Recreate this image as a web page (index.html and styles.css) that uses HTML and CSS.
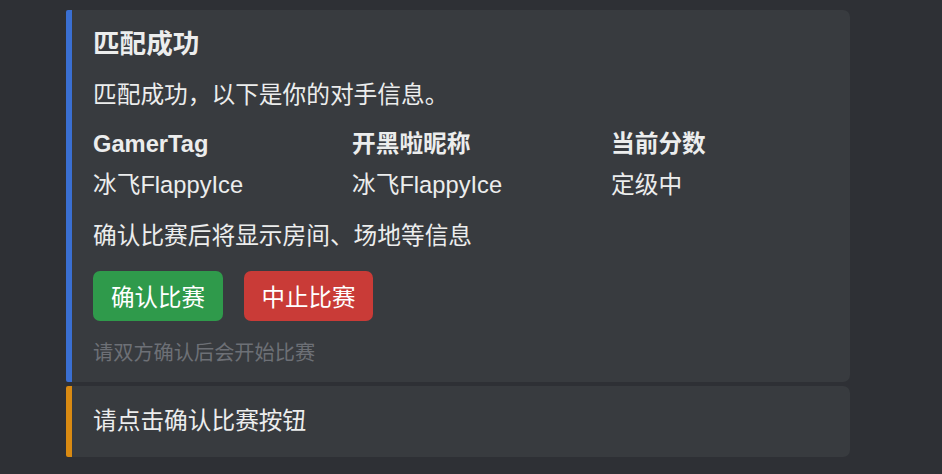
FILE: index.html
```html
<!DOCTYPE html>
<html lang="zh-CN">
<head>
<meta charset="utf-8">
<title>匹配成功</title>
<link rel="stylesheet" href="styles.css">
</head>
<body>
<main class="stack">
  <section class="card card-blue">
    <h1 class="title">匹配成功</h1>
    <p class="lead">匹配成功，以下是你的对手信息。</p>
    <div class="info-grid">
      <div class="th">GamerTag</div>
      <div class="th">开黑啦昵称</div>
      <div class="th">当前分数</div>
      <div class="td">冰飞FlappyIce</div>
      <div class="td">冰飞FlappyIce</div>
      <div class="td">定级中</div>
    </div>
    <p class="note">确认比赛后将显示房间、场地等信息</p>
    <div class="actions">
      <button class="btn btn-green">确认比赛</button>
      <button class="btn btn-red">中止比赛</button>
    </div>
    <p class="hint">请双方确认后会开始比赛</p>
  </section>
  <section class="card card-orange">
    <p class="msg">请点击确认比赛按钮</p>
  </section>
</main>
</body>
</html>
```

FILE: styles.css
```css
html, body {
  margin: 0;
  padding: 0;
  background: #2e3035;
  font-family: "Liberation Sans", "Noto Sans CJK SC", sans-serif;
  color: #eceded;
}

.stack {
  display: flex;
  flex-direction: column;
  gap: 4px;
  width: 784px;
  margin-left: 66px;
  padding-top: 10px;
}

.card {
  background: #383b3f;
  border-radius: 2px 7px 7px 2px;
  border-left: 6px solid #3a6fd2;
  padding: 16px 21px 15px 21px;
}

.card-orange {
  border-left-color: #d98a12;
  padding-top: 18px;
  padding-bottom: 19px;
}

.title {
  margin: 0;
  font-size: 26.6px;
  line-height: 36px;
  font-weight: bold;
}

.lead {
  margin: 16px 0 0;
  font-size: 23.7px;
  line-height: 34px;
}

.info-grid {
  margin-top: 15px;
  display: grid;
  grid-template-columns: repeat(3, 259px);
  row-gap: 7px;
}

.th {
  font-size: 23.7px;
  line-height: 34px;
  font-weight: bold;
}

.td {
  font-size: 23.7px;
  line-height: 34px;
}

.note {
  margin: 17px 0 0;
  font-size: 23.7px;
  line-height: 34px;
}

.actions {
  margin-top: 18px;
  display: flex;
  gap: 21px;
}

.btn {
  height: 50px;
  width: 130px;
  border: none;
  border-radius: 7px;
  color: #ffffff;
  font-family: "Liberation Sans", "Noto Sans CJK SC", sans-serif;
  font-size: 23.5px;
  font-weight: 400;
  padding: 0;
}

.btn-green { background: #2f9a4b; }
.btn-red { background: #c93b37; width: 129px; }

.hint {
  margin: 18px 0 0;
  font-size: 20.2px;
  line-height: 28px;
  color: #6d7076;
}

.msg {
  margin: 0;
  font-size: 23.7px;
  line-height: 34px;
}
```
